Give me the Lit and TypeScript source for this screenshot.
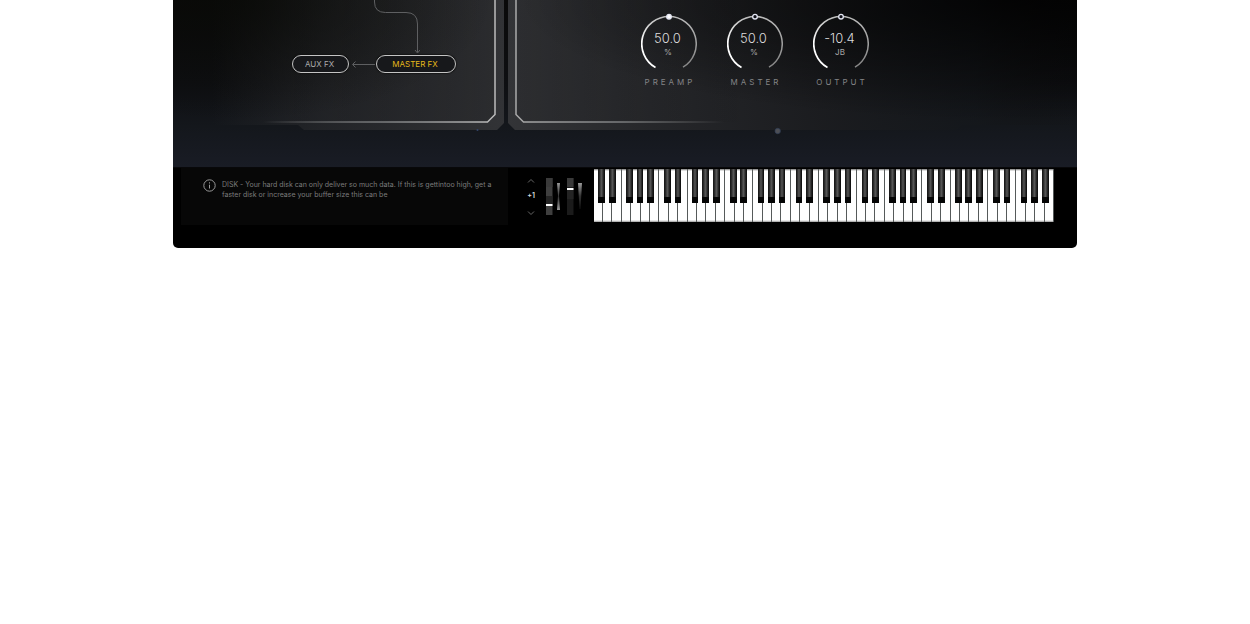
import { LitElement, html, css, svg } from "lit";
import { customElement, property } from "lit/decorators.js";

@customElement("level-knob")
class LevelKnob extends LitElement {
  @property() name = "";
  @property() value = "";
  @property() unit = "";
  @property({ type: Boolean }) filled = false;

  static styles = css`
    :host { display: block; width: 56px; }
    .knob { display: flex; flex-direction: column; align-items: center; gap: 4px; }
    .dial { display: grid; width: 56px; height: 60px; }
    .dial > * { grid-area: 1 / 1; }
    .range { opacity: 0; margin: 0; width: 56px; height: 56px; cursor: pointer; }
    .readout { display: flex; flex-direction: column; align-items: center; padding-top: 18px; color: #dcdcdc; }
    .value { font-size: 13px; line-height: 16px; margin-right: 3px; font-weight: 300; }
    .unit { font-size: 8px; line-height: 12px; color: #aaa; margin-right: 2px; }
    .name { font-size: 8px; line-height: 12px; letter-spacing: 3px; color: #838486; padding-left: 2px; }
  `;

  render() {
    return html`<label class="knob">
      <span class="dial">
        <svg width="56" height="60" viewBox="0 0 56 60" fill="none" aria-hidden="true">
          <defs>
            <linearGradient id="l" x1="0" y1="0" x2="0" y2="1"><stop stop-color="#bbb" /><stop offset=".5" stop-color="#fff" /><stop offset="1" stop-color="#fff" /></linearGradient>
            <linearGradient id="r" x1="0" y1="0" x2="0" y2="1"><stop stop-color="#bbb" /><stop offset="1" stop-color="#858585" /></linearGradient>
          </defs>
          <path d="M28 4.5A27.3 27.3 0 0 0 14.5 55.5" stroke="url(#l)" stroke-width="1.7" />
          <path d="M28 4.5A27.3 27.3 0 0 1 42 55.2" stroke="url(#r)" stroke-width="1.5" />
          <circle cx="28" cy="4.7" r="2.3" fill=${this.filled ? "#fff" : "#101118"} stroke="#e6e8f6" stroke-width="1.3" />
        </svg>
        <span class="readout"><span class="value">${this.value}</span><span class="unit">${this.unit}</span></span>
        <input class="range" type="range" min="-100" max="100" .value=${this.value} />
      </span>
      <span class="name">${this.name}</span>
    </label>`;
  }
}

@customElement("piano-keys")
class PianoKeys extends LitElement {
  static styles = css`
    :host { display: flex; height: 53px; background: #555; }
    .octave { position: relative; flex: 1; display: flex; }
    button { border: 0; padding: 0; margin: 0; border-radius: 0; }
    .white { flex: 1; background: linear-gradient(#777, #fff 2px, #fff 51px, #999); border-right: 1px solid #565a5a; }
    .black {
      position: absolute; top: 0; width: 10.2%; height: 34px;
      background:
        linear-gradient(transparent 28px, #050505 28px),
        linear-gradient(90deg, #1a1a1a 14%, #3a3a3a 30%, #555 50%, #2c2c2c 75%, #111 86%);
    }
  `;
  private sharps = [["C♯", 7.3], ["D♯", 23.3], ["F♯", 49.3], ["G♯", 65.3], ["A♯", 81.5]] as const;

  render() {
    return [1, 2, 3, 4, 5, 6, 7].map((o) => html`<div class="octave">
      ${["C", "D", "E", "F", "G", "A", "B"].map((n) => html`<button class="white" aria-label=${n + o}></button>`)}
      ${this.sharps.map(([n, x]) => html`<button class="black" aria-label=${n + o} style="left:${x}%"></button>`)}
    </div>`);
  }
}

@customElement("app-root")
class AppRoot extends LitElement {
  static styles = css`
    :host { display: block; background: #fff; font-family: Inter, "Open Sans", sans-serif; }
    .synth { max-width: 904px; margin: 0 auto; background: #000; border-radius: 0 0 5px 5px; overflow: hidden; }
    .stage {
      display: grid; grid-template-columns: 331fr 569fr; gap: 4px; height: 167px;
      background: linear-gradient(#090909, #0e0f12 50%, #14171c 76%, #191c25);
    }
    .panel { position: relative; overflow: hidden; }
    .plate { position: absolute; top: 0; }
    .plate.left { right: 0; }
    .plate.right { left: 0; }
    .routing { position: relative; display: flex; flex-direction: column; align-items: flex-end; padding-right: 48px; }
    .wire { margin-right: 36px; }
    .row { display: flex; align-items: center; }
    .fx {
      font: 8px/10px Inter, sans-serif; height: 18px; padding: 0 2px 0 0; border-radius: 9px;
      border: 1px solid #c4c4c4; background: #17181b; color: #aaa; box-shadow: 0 0 1px 1px #111a;
    }
    .aux { width: 57px; }
    .master { width: 80px; color: #e3b71a; }
    .knobs { position: relative; display: flex; gap: 30px; padding: 12px 0 0 133px; }
    .bottom { display: grid; grid-template-columns: 327fr 74px 461fr; padding: 0 23px 23px 8px; column-gap: 6px; border-top: 1px solid #08080a; }
    .info { display: flex; gap: 6px; padding: 11px 12px 0 22px; height: 46px; background: #070707; }
    .info p { margin: 1px 0 0; font-size: 7px; line-height: 10px; color: #7c7c7c; }
    .icon { flex: none; }
    .wheels { display: flex; padding: 10px 0 0 12px; }
    .shift { display: flex; flex-direction: column; align-items: center; justify-content: space-between; width: 12px; height: 38px; margin-right: 9px; font-size: 7px; line-height: 10px; color: #ddd; }
    .shift span { margin-bottom: 3px; font-weight: 600; }
    .step { background: none; border: 0; padding: 0; height: 6px; display: flex; }
    .wheel { display: grid; width: 21px; height: 38px; }
    .wheel > * { grid-area: 1 / 1; }
    .wheel input { opacity: 0; margin: 0; width: 7px; height: 38px; writing-mode: vertical-lr; }
    piano-keys { margin-top: 1px; }
  `;

  render() {
    return html`<main class="synth">
      <section class="stage">
        <div class="panel">
          <svg class="plate left" width="331" height="167" fill="none" aria-hidden="true">
            <defs>
              <linearGradient id="p1" x1="0" y1="0" x2="1" y2="0"><stop offset=".12" stop-color="#2c2d30" stop-opacity="0" /><stop offset=".45" stop-color="#2a2b2e" stop-opacity=".65" /><stop offset="1" stop-color="#323336" /></linearGradient>
              <linearGradient id="s1" x1="0" y1="0" x2="1" y2="0"><stop stop-color="#000" stop-opacity="0" /><stop offset="1" stop-color="#000" stop-opacity=".13" /></linearGradient>
              <radialGradient id="d1" gradientUnits="userSpaceOnUse" cx="0" cy="0" r="1" gradientTransform="translate(60 0) scale(260 121)"><stop stop-color="#090a07" stop-opacity=".75" /><stop offset=".5" stop-color="#090a07" stop-opacity=".35" /><stop offset="1" stop-color="#090a07" stop-opacity="0" /></radialGradient>
              <linearGradient id="h1" gradientUnits="userSpaceOnUse" x1="90" y1="0" x2="322" y2="0"><stop stop-color="#aaa" stop-opacity="0" /><stop offset=".5" stop-color="#77797b" /><stop offset="1" stop-color="#bbb" /></linearGradient>
            </defs>
            <path d="M0 0H331V123L324 130H131L125 125H0Z" fill="url(#p1)" />
            <path d="M90 0H322V114L315 122H90Z" fill="url(#s1)" />
            <path d="M0 0H322V114L315 122H0Z" fill="url(#d1)" />
            <path d="M322 0V114.500L314.500 122H90" stroke="url(#h1)" stroke-width="1.500" />
            <circle cx="304.500" cy="130" r="1" fill="#35466b" />
          </svg>
          <div class="routing">
            <svg class="wire" width="50" height="55" fill="none" stroke="#5e5f61" aria-hidden="true">
              <path d="M4.500 0V2Q4.500 12.500 15.500 12.500H36Q47.500 12.500 47.500 24V52M45 50L47.500 53L50 50" />
            </svg>
            <div class="row">
              <button class="fx aux">AUX FX</button>
              <svg width="27" height="10" fill="none" stroke="#5e5f61" aria-hidden="true"><path d="M26 5.500H4M6.500 2.500L3.500 5.500L6.500 8.500" /></svg>
              <button class="fx master">MASTER FX</button>
            </div>
          </div>
        </div>
        <div class="panel">
          <svg class="plate right" width="569" height="167" fill="none" aria-hidden="true">
            <defs>
              <linearGradient id="p2" x1="0" y1="0" x2="1" y2="0"><stop stop-color="#333437" /><stop offset=".25" stop-color="#27282b" stop-opacity=".95" /><stop offset=".55" stop-color="#1c1d20" stop-opacity=".9" /><stop offset=".82" stop-color="#15181c" stop-opacity=".6" /><stop offset="1" stop-color="#111" stop-opacity="0" /></linearGradient>
              <radialGradient id="d2" gradientUnits="userSpaceOnUse" cx="0" cy="0" r="1" gradientTransform="translate(500 0) scale(490 121)"><stop stop-color="#000" stop-opacity=".75" /><stop offset=".5" stop-color="#000" stop-opacity=".4" /><stop offset="1" stop-color="#000" stop-opacity="0" /></radialGradient>
              <linearGradient id="s2" x1="0" y1="0" x2="1" y2="0"><stop stop-color="#000" stop-opacity=".12" /><stop offset=".45" stop-color="#000" stop-opacity="0" /></linearGradient>
              <linearGradient id="h2" gradientUnits="userSpaceOnUse" x1="7" y1="0" x2="216" y2="0"><stop stop-color="#aaa" /><stop offset=".5" stop-color="#7b7d7f" /><stop offset="1" stop-color="#888" stop-opacity="0" /></linearGradient>
            </defs>
            <path d="M0 0H569V125H454L448 130H7L0 123Z" fill="url(#p2)" />
            <path d="M8 0H569V122H16L8 114Z" fill="url(#s2)" />
            <path d="M8 0H569V122H16L8 114Z" fill="url(#d2)" />
            <path d="M8 0V114.500L15.500 122H216" stroke="url(#h2)" stroke-width="1.500" />
            <circle cx="269.700" cy="131" r="2.700" fill="#4d4f55" stroke="#2f3d57" stroke-width=".7" />
          </svg>
          <div class="knobs">
            <level-knob name="PREAMP" value="50.0" unit="%" filled></level-knob>
            <level-knob name="MASTER" value="50.0" unit="%"></level-knob>
            <level-knob name="OUTPUT" value="-10.4" unit="JB"></level-knob>
          </div>
        </div>
      </section>
      <section class="bottom">
        <div class="info">
          <svg class="icon" width="13" height="13" fill="none" stroke="#999" aria-hidden="true"><circle cx="6.500" cy="6.500" r="5.700" /><path d="M6.500 5.700V9.500M6.500 3.300V4.500" /></svg>
          <p>DISK - Your hard disk can only deliver so much data. If this is gettintoo high, get a faster disk or increase your buffer size this can be</p>
        </div>
        <div class="wheels">
          <div class="shift">
            <button class="step" aria-label="Octave up"><svg width="8" height="6" fill="none" stroke="#666"><path d="M1 4.500L4 1.500L7 4.500" /></svg></button>
            <span>+1</span>
            <button class="step" aria-label="Octave down"><svg width="8" height="6" fill="none" stroke="#666"><path d="M1 1.500L4 4.500L7 1.500" /></svg></button>
          </div>
          ${this.wheel("Pitch", 26, svg`<path d="M11 5H14L13 17.500L14 32H11L12 17.500Z" fill="url(#t)" />`, "#3f3f3f")}
          ${this.wheel("Modulation", 10, svg`<path d="M11 5H15L13.500 31H12.500Z" fill="url(#t)" />`, "#1b1b1b")}
        </div>
        <piano-keys></piano-keys>
      </section>
    </main>`;
  }

  private wheel(name: string, y: number, taper: unknown, tone: string) {
    const pitch = name === "Pitch";
    return html`<label class="wheel">
      <svg width="21" height="38" aria-hidden="true">
        <defs><linearGradient id=${"t" + name} x1="0" y1="0" x2="0" y2="1"><stop stop-color="#999" /><stop offset=".5" stop-color="#333" /><stop offset="1" stop-color=${pitch ? "#999" : "#111"} /></linearGradient></defs>
        <rect width="6.500" height="37" fill=${tone} />
        <rect width="6.500" height="9" fill="#3a3a3a" />
        <rect y=${pitch ? 18 : 12} width="6.500" height="9" fill="#242424" />
        <rect y=${y} width="6.500" height="2" fill="#fff" />
        ${pitch
          ? svg`<path d="M11 5H14L13 17.500L14 32H11L12 17.500Z" fill="url(#tPitch)" />`
          : svg`<path d="M11 5H15L13.500 31H12.500Z" fill="url(#tModulation)" />`}
      </svg>
      <input type="range" aria-label=${name} />
    </label>`;
  }
}
